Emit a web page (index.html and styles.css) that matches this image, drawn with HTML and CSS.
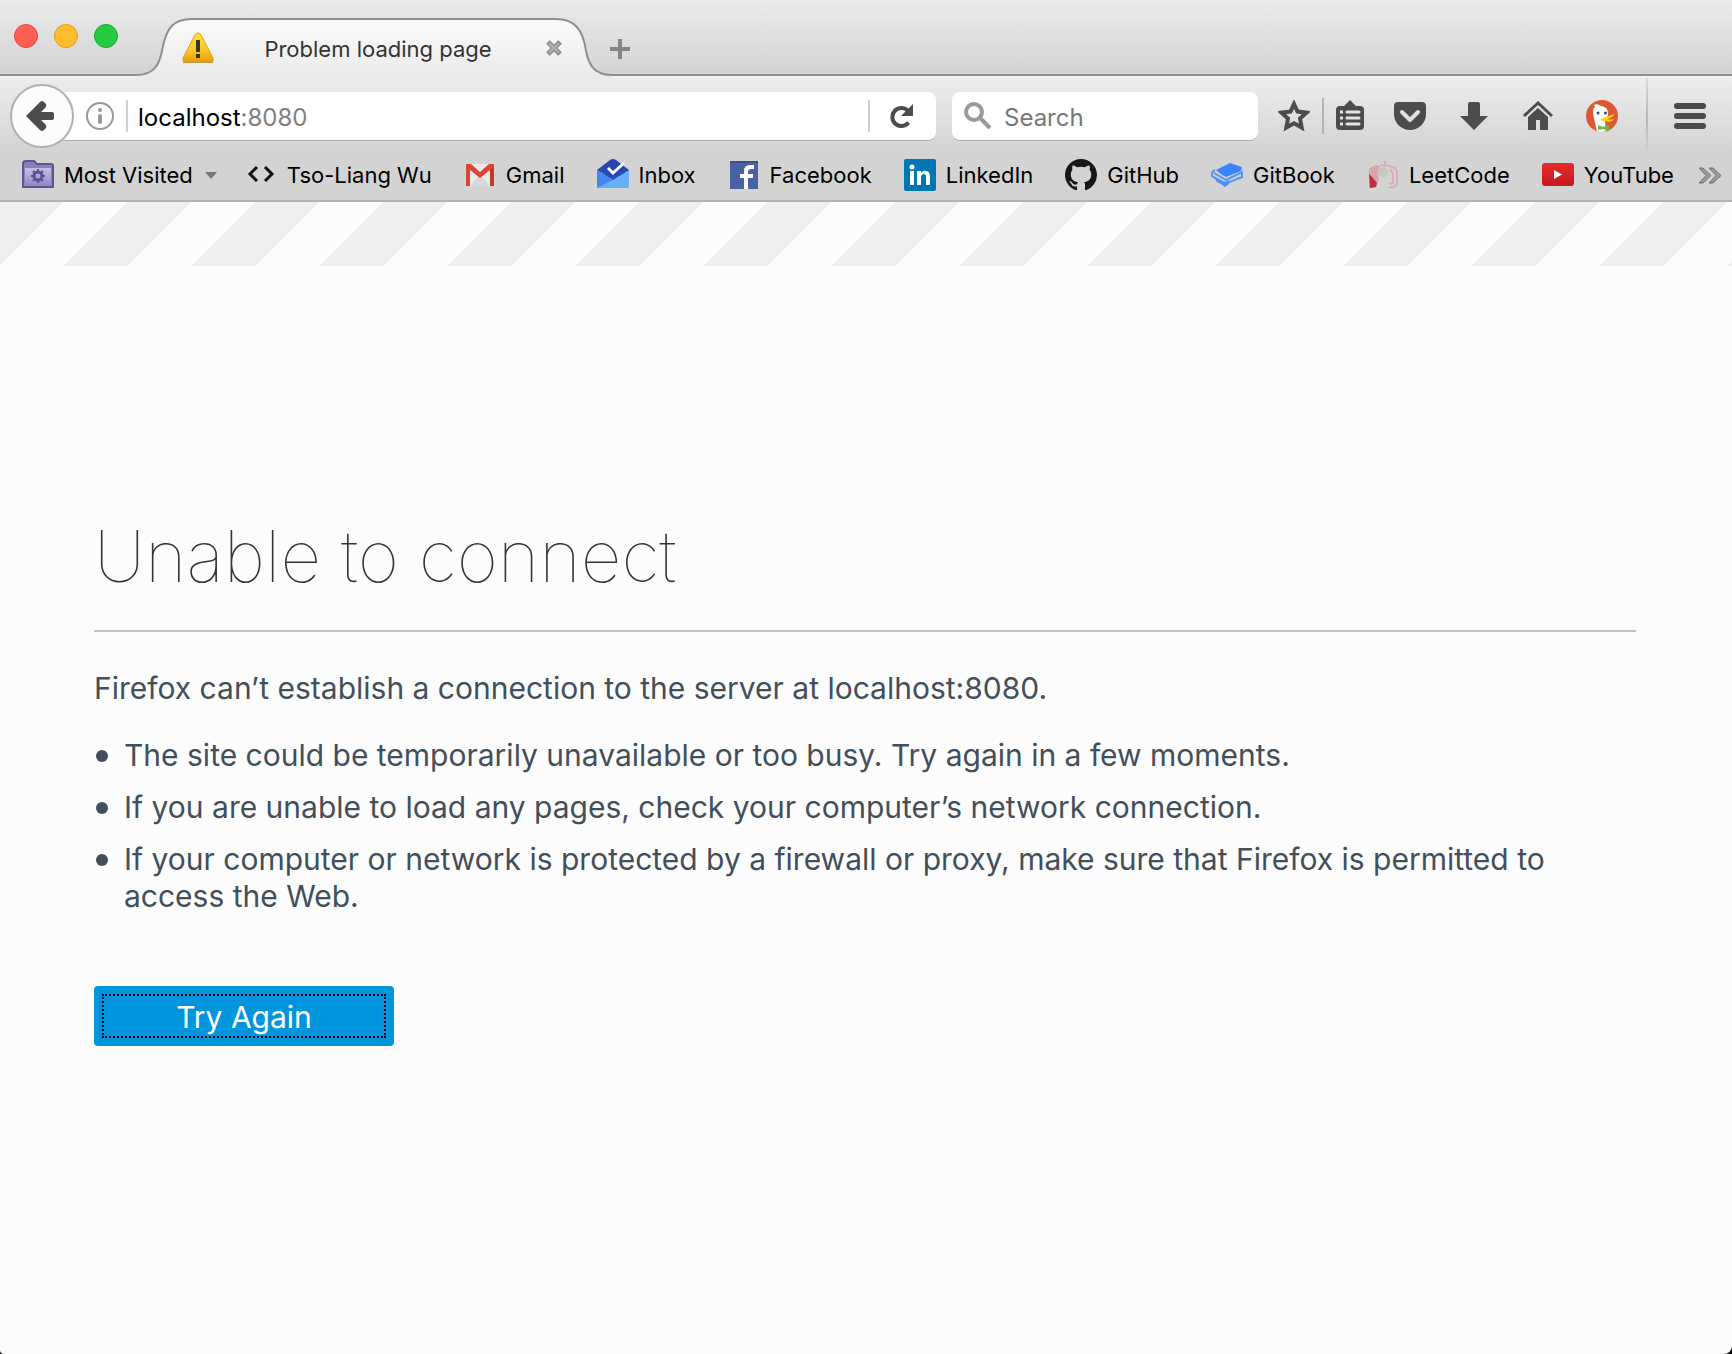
FILE: index.html
```html
<!DOCTYPE html>
<html lang="en">
<head>
<meta charset="utf-8">
<title>Problem loading page</title>
<link rel="stylesheet" href="styles.css">
</head>
<body>
<header class="chrome">
  <div class="titlebar">
    <div class="lights">
      <button class="light light-close" aria-label="Close window"></button>
      <button class="light light-min" aria-label="Minimize window"></button>
      <button class="light light-zoom" aria-label="Zoom window"></button>
    </div>
    <div class="tab">
      <svg class="tab-shape" width="476" height="60" viewBox="0 0 476 60" aria-hidden="true">
        <defs>
          <linearGradient id="tabFill" x1="0" y1="0" x2="0" y2="1"><stop offset="0" stop-color="#fbfbfb"/><stop offset="1" stop-color="#eaeaea"/></linearGradient>
        </defs>
        <path d="M0 60V57C17 57 23 48 26 33C30 9 38 1 56 1H420C438 1 447 11 450 33C453 49 460 57 476 57V60Z" fill="url(#tabFill)"/>
        <path d="M0 57C17 57 23 48 26 33C30 9 38 1 56 1H420C438 1 447 11 450 33C453 49 460 57 476 57" fill="none" stroke="#8f8f8f" stroke-width="2"/>
      </svg>
      <div class="tab-content">
        <svg width="32" height="32" viewBox="0 0 32 32" aria-hidden="true">
          <defs><linearGradient id="warn" x1="0" y1="0" x2="0" y2="1"><stop offset="0" stop-color="#ffe62e"/><stop offset=".6" stop-color="#fbc62a"/><stop offset="1" stop-color="#ee9c05"/></linearGradient></defs>
          <path d="M1 30h30v1H1z" fill="#9a8f7a"/>
          <path d="M16 1Q18 1 19 3L31 26Q32 30 29 30H3Q0 30 1 26L13 3Q14 1 16 1Z" fill="url(#warn)" stroke="#dca310" stroke-width="1"/>
          <path d="M14 8h4v12h-4zM14 22h4v4h-4z" fill="#37352c"/>
        </svg>
        <span class="tab-title">Problem loading page</span>
        <button class="icon-btn" aria-label="Close tab"><svg width="16" height="16" viewBox="0 0 16 16"><path d="M2 2L14 14M14 2L2 14" stroke="#858585" stroke-width="5"/><path d="M3 3L13 13M13 3L3 13" stroke="#acacac" stroke-width="3"/></svg></button>
      </div>
    </div>
    <button class="icon-btn new-tab" aria-label="New tab"><svg width="20" height="20" viewBox="0 0 20 20"><path d="M8 0h4v8h8v4h-8v8H8v-8H0V8h8z" fill="#858585"/></svg></button>
  </div>

  <div class="navbar">
    <button class="back" aria-label="Back"><svg width="28" height="30" viewBox="0 0 28 30"><path d="M0 15L14 1Q16-1 18 1L20 3Q21 5 19 7L15 11H26Q28 11 28 13V17Q28 19 26 19H15L19 23Q21 25 20 27L18 29Q16 31 14 29Z" fill="#4c4c4c"/></svg></button>
    <div class="urlbar">
      <svg width="28" height="28" viewBox="0 0 28 28" aria-hidden="true"><circle cx="14" cy="14" r="13" fill="none" stroke="#999" stroke-width="2"/><circle cx="14" cy="8" r="2" fill="#999"/><path d="M14 14v6" stroke="#999" stroke-width="4" stroke-linecap="round"/></svg>
      <span class="divider"></span>
      <div class="url" role="textbox" aria-label="Address" tabindex="0">localhost<span class="port">:8080</span></div>
      <span class="divider"></span>
      <button class="icon-btn reload" aria-label="Reload"><svg width="24" height="24" viewBox="0 0 24 24"><path d="M18.500 18.500A9 9 0 1 1 18 7" fill="none" stroke="#4c4c4c" stroke-width="4"/><path d="M23 0V12H11Z" fill="#4c4c4c"/></svg></button>
    </div>
    <label class="search">
      <svg width="28" height="28" viewBox="0 0 28 28" aria-hidden="true"><circle cx="10" cy="10" r="8" fill="none" stroke="#999" stroke-width="4"/><path d="M16 16L26 26" stroke="#999" stroke-width="4"/></svg>
      <input type="text" placeholder="Search" aria-label="Search">
    </label>
    <div class="tools">
      <div class="tool-pair">
        <button class="icon-btn" aria-label="Bookmark this page"><svg width="32" height="32" viewBox="0 0 32 32"><path d="M16 4L19.500 11.600L28.500 12.700L22 18.600L23.700 27.600L16 23.300L8.300 27.600L10 18.600L3.500 12.700L12.500 11.600Z" fill="none" stroke="#4c4c4c" stroke-width="4"/></svg></button>
        <span class="divider divider-dark"></span>
        <button class="icon-btn" aria-label="Bookmarks menu"><svg width="32" height="32" viewBox="0 0 32 32"><path d="M6 6H10L16 0L22 6H26Q30 6 30 10V26Q30 30 26 30H6Q2 30 2 26V10Q2 6 6 6Z" fill="#4c4c4c"/><path d="M13 12H25M13 18H25M13 24H25" stroke="#e4e4e4" stroke-width="3" stroke-linecap="round"/><path d="M6 12h3M6 18h3M6 24h3" stroke="#e4e4e4" stroke-width="3"/></svg></button>
      </div>
      <button class="icon-btn" aria-label="Save to Pocket"><svg width="32" height="32" viewBox="0 0 32 32"><path d="M4 2H28Q32 2 32 6V14A16 16 0 0 1 0 14V6Q0 2 4 2Z" fill="#4c4c4c"/><path d="M8 12L16 20L24 12" fill="none" stroke="#e0e0e0" stroke-width="4" stroke-linecap="round" stroke-linejoin="round"/></svg></button>
      <button class="icon-btn" aria-label="Downloads"><svg width="32" height="32" viewBox="0 0 32 32"><path d="M12 2H20Q22 2 22 4V16H30L16 30L2 16H10V4Q10 2 12 2Z" fill="#4c4c4c"/></svg></button>
      <button class="icon-btn" aria-label="Home"><svg width="32" height="32" viewBox="0 0 32 32"><path d="M2 16L16 3L30 16" fill="none" stroke="#4c4c4c" stroke-width="3"/><path d="M16 8L26 17V30H18V20H14V30H6V17Z" fill="#4c4c4c"/></svg></button>
      <button class="icon-btn" aria-label="DuckDuckGo"><svg width="32" height="32" viewBox="0 0 32 32"><circle cx="16" cy="16" r="16" fill="#de5833"/><path d="M8 5Q11 3 15 6Q22 7 22 13Q22 18 19 21L20 31Q15 33 11 31Q8 20 7 12Q7 8 9 7Z" fill="#fff"/><circle cx="12" cy="13" r="1.500" fill="#2d4f8e"/><circle cx="19.500" cy="13" r="1.500" fill="#2d4f8e"/><path d="M15 19Q19 17 23 16L28 14Q28 17 21 19Q25 20 28 19Q26 23 19 21Q15 21 15 19Z" fill="#fdd20a"/><path d="M12 25L17 27L23 25V31L17 29L12 30Z" fill="#65bc46"/></svg></button>
    </div>
    <span class="menu-sep"></span>
    <button class="icon-btn menu" aria-label="Open menu"><svg width="32" height="26" viewBox="0 0 32 26"><path d="M3 3H29M3 13H29M3 23H29" stroke="#4c4c4c" stroke-width="6" stroke-linecap="round"/></svg></button>
  </div>

  <nav class="bookmarks" aria-label="Bookmarks">
    <a class="bookmark" href="#most-visited"><svg width="32" height="32" viewBox="0 0 32 32"><defs><linearGradient id="folder" x1="0" y1="0" x2="0" y2="1"><stop offset="0" stop-color="#c6bfe6"/><stop offset="1" stop-color="#9286c6"/></linearGradient></defs><path d="M1 28V5Q1 2 4 2H12L15 5H29Q31 5 31 7V28Z" fill="#8a80bb" stroke="#5f5690" stroke-width="2"/><path d="M3 9H29V27H3Z" fill="url(#folder)"/><circle cx="16" cy="17" r="4" fill="none" stroke="#5a5295" stroke-width="3"/><path d="M16 10V13M16 21V24M9 17H12M20 17H23M11 12L13 14M19 20L21 22M21 12L19 14M13 20L11 22" stroke="#5a5295" stroke-width="2"/></svg>Most Visited<svg class="caret" width="12" height="7" viewBox="0 0 12 7"><path d="M0 0H12L6 7Z" fill="#777"/></svg></a>
    <a class="bookmark" href="#tso-liang"><svg width="32" height="32" viewBox="0 0 32 32"><path d="M12 8L5 15L12 22M20 8L27 15L20 22" fill="none" stroke="#111" stroke-width="3"/></svg>Tso-Liang Wu</a>
    <a class="bookmark" href="#gmail"><svg width="32" height="32" viewBox="0 0 32 32"><path d="M2 5H30V27H2Z" fill="#e9e9e9"/><path d="M6 27L16 16L26 27Z" fill="#d8d8d8"/><path d="M2 5H7L16 13L25 5H30V27H26V11L16 19L6 11V27H2Z" fill="#db4437"/><path d="M26 11L30 8V27H26Z" fill="#c23a2e"/></svg>Gmail</a>
    <a class="bookmark" href="#inbox"><svg width="32" height="32" viewBox="0 0 32 32"><path d="M0 11L13 1Q16-1 19 1L32 11V29H0Z" fill="#2a4bb8"/><path d="M0 11L16 21L32 11V29H0Z" fill="#67b0f7"/><path d="M0 11L16 21L0 29Z" fill="#4289ef"/><path d="M4 9L14 1Q16 0 18 1L28 9L16 18Z" fill="#2846ac"/><path d="M11 9L16 14L27 4" fill="none" stroke="#fff" stroke-width="3"/></svg>Inbox</a>
    <a class="bookmark" href="#facebook"><svg width="32" height="32" viewBox="0 0 32 32"><path d="M2 2H30V30H2Z" fill="#4862a3"/><path d="M2 2H30V4H2Z" fill="#3a5086"/><path d="M16 30V19H12V15H16V12Q16 6 22 6H26V10H23Q20 10 20 13V15H25V19H20V30Z" fill="#fff"/></svg>Facebook</a>
    <a class="bookmark" href="#linkedin"><svg width="32" height="32" viewBox="0 0 32 32"><rect width="32" height="32" rx="2" fill="#0077b5"/><path d="M6 12H10V26H6ZM13 12H17V14Q19 11 22 12Q26 12 26 18V26H22V18Q22 15 20 15Q17 15 17 19V26H13Z" fill="#fff"/><circle cx="8" cy="8" r="2.500" fill="#fff"/></svg>LinkedIn</a>
    <a class="bookmark" href="#github"><svg width="32" height="32" viewBox="0 0 16 16"><path fill="#181616" d="M8 0C3.580 0 0 3.580 0 8c0 3.540 2.290 6.530 5.470 7.590.4.070.55-.17.55-.38 0-.19-.01-.82-.01-1.490-2.010.37-2.530-.49-2.690-.94-.09-.23-.48-.94-.82-1.130-.28-.15-.68-.52-.01-.53.63-.01 1.080.58 1.230.82.72 1.210 1.870.87 2.330.66.07-.52.28-.87.51-1.070-1.780-.2-3.640-.89-3.640-3.950 0-.87.31-1.590.82-2.150-.08-.2-.36-1.020.08-2.120 0 0 .67-.21 2.200.82.64-.18 1.320-.27 2-.27s1.360.09 2 .27c1.530-1.040 2.200-.82 2.200-.82.44 1.100.16 1.920.08 2.120.51.56.82 1.270.82 2.150 0 3.070-1.870 3.750-3.650 3.950.29.25.54.73.54 1.480 0 1.070-.01 1.930-.01 2.200 0 .21.15.46.55.38A8.010 8.010 0 0 0 16 8c0-4.420-3.580-8-8-8z"/></svg>GitHub</a>
    <a class="bookmark" href="#gitbook"><svg width="32" height="32" viewBox="0 0 32 32"><path d="M5 11L19 4Q25 6 31 8L30 12L15 18Q9 15 5 11Z" fill="#3884ff"/><path d="M4 11Q0 13 1 17L14 25L31 18V13L15 21L3 14" fill="none" stroke="#5595fa" stroke-width="2"/><path d="M4 18L14 23L18 21V25L14 28L5 22Z" fill="#4a8dfb"/></svg>GitBook</a>
    <a class="bookmark" href="#leetcode"><svg width="32" height="32" viewBox="0 0 32 32"><path d="M4 8Q10 5 13 7L11 14L12 20L9 28L2 29V10Z" fill="#dba5ac"/><path d="M2 15L6 19L10 24L9 28L3 29Z" fill="#c22c46"/><circle cx="16" cy="13" r="5" fill="#c9c8c0"/><path d="M18 2V8M13 6L24 7M23 8Q30 8 30 14V25Q28 29 22 28M23 11Q26 12 26 16V23Q24 26 22 24" fill="none" stroke="#dfaab2" stroke-width="2"/></svg>LeetCode</a>
    <a class="bookmark" href="#youtube"><svg width="32" height="32" viewBox="0 0 32 32"><defs><linearGradient id="yt" x1="0" y1="0" x2="0" y2="1"><stop offset="0" stop-color="#e62b2c"/><stop offset="1" stop-color="#c4191d"/></linearGradient></defs><rect y="4" width="32" height="23" rx="3" fill="url(#yt)"/><path d="M12 11L20 15.500L12 20Z" fill="#fff"/></svg>YouTube</a>
    <button class="icon-btn overflow" aria-label="More bookmarks"><svg width="24" height="17" viewBox="0 0 24 17"><path d="M1 1H5L13 8.500L5 16H1L8 8.500ZM11 1H15L23 8.500L15 16H11L18 8.500Z" fill="#999" stroke="#6f6f6f"/></svg></button>
  </nav>
</header>

<main class="page">
  <section class="error">
    <h1 class="error-title">Unable to connect</h1>
    <p class="error-lead">Firefox can’t establish a connection to the server at localhost:8080.</p>
    <ul class="error-list">
      <li>The site could be temporarily unavailable or too busy. Try again in a few moments.</li>
      <li>If you are unable to load any pages, check your computer’s network connection.</li>
      <li>If your computer or network is protected by a firewall or proxy, make sure that Firefox is permitted to access the Web.</li>
    </ul>
    <button class="retry">Try Again</button>
  </section>
</main>
</body>
</html>
```
FILE: styles.css
```css
* {
  box-sizing: border-box;
}

html {
  background: #000;
}

body {
  margin: 0;
  min-height: 100vh;
  display: flex;
  flex-direction: column;
  font-family: Inter, "Liberation Sans", sans-serif;
}

svg {
  display: block;
  flex: none;
}

button {
  font: inherit;
  border: 0;
  padding: 0;
}

.icon-btn {
  display: grid;
  place-items: center;
  flex: none;
  background: none;
}

.chrome {
  background: #d3d3d3;
  border-bottom: 2px solid #b1b1b1;
}

/* Title bar and tabs */
.titlebar {
  display: flex;
  align-items: flex-end;
  height: 76px;
  padding-left: 14px;
  background: linear-gradient(#ebebeb, #d3d3d3);
  border-bottom: 2px solid #8f8f8f;
}

.lights {
  display: flex;
  gap: 16px;
  width: 122px;
  padding-bottom: 26px;
}

.light {
  width: 24px;
  height: 24px;
  border-radius: 50%;
  border: 1px solid;
}

.light-close {
  background: #ff5f57;
  border-color: #e2463f;
}

.light-min {
  background: #ffbd2e;
  border-color: #e1a116;
}

.light-zoom {
  background: #28ca41;
  border-color: #12ac28;
}

.tab {
  display: grid;
  width: 476px;
  margin-bottom: -4px;
}

.tab-shape,
.tab-content {
  grid-area: 1 / 1;
}

.tab-content {
  display: flex;
  align-items: center;
  padding: 0 50px 0 46px;
}

.tab-title {
  flex: 1;
  padding: 2px 4px 0 0;
  text-align: center;
  font-size: 22px;
  color: #333;
}

.new-tab {
  align-self: center;
  margin-left: -2px;
  padding-top: 24px;
}

/* Navigation bar */
.navbar {
  display: flex;
  align-items: center;
  height: 78px;
  padding: 0 26px 0 10px;
  background: linear-gradient(#ececec, #d3d3d3);
  border-top: 2px solid #f3f3f3;
}

.back {
  display: grid;
  place-items: center;
  flex: none;
  width: 64px;
  height: 64px;
  margin-right: -16px;
  padding-right: 4px;
  border: 2px solid #b1b1b1;
  border-radius: 50%;
  background: #fcfcfc;
  z-index: 1;
}

.urlbar,
.search {
  display: flex;
  align-items: center;
  height: 49px;
  background: #fff;
  border-bottom: 1px solid #aaa;
  border-radius: 8px;
  font-size: 24px;
}

.urlbar {
  flex: 1;
  padding-left: 28px;
  margin-right: 16px;
}

.divider {
  flex: none;
  width: 2px;
  height: 32px;
  margin: 0 10px 0 12px;
  background: #d0d0d0;
}

.divider-dark {
  height: 36px;
  background: #b4b4b4;
}

.url {
  flex: 1;
  padding-top: 4px;
}

.port {
  color: #808080;
}

.reload {
  width: 44px;
  margin-right: 12px;
}

.search {
  width: 306px;
  gap: 12px;
  padding: 0 12px;
}

.search input {
  flex: 1;
  min-width: 0;
  border: 0;
  padding: 4px 0 0;
  background: none;
  font: inherit;
}

.search input::placeholder {
  color: #777;
  opacity: 1;
}

.tools {
  display: flex;
  align-items: center;
  gap: 32px;
  padding: 0 28px 0 20px;
}

.tool-pair {
  display: flex;
  align-items: center;
  margin-right: -4px;
}

.menu-sep {
  width: 2px;
  height: 76px;
  margin-right: 26px;
  background: linear-gradient(#dcdcdc, #b6b6b6 50%, #d3d3d3);
}

/* Bookmarks toolbar */
.bookmarks {
  display: flex;
  align-items: center;
  gap: 32px;
  height: 46px;
  padding: 0 8px 4px 22px;
}

.bookmark {
  display: flex;
  align-items: center;
  gap: 10px;
  font-size: 22px;
  color: #000;
  text-decoration: none;
  white-space: nowrap;
}

.caret {
  margin: 0 -4px 0 2px;
}

.overflow {
  margin-left: -8px;
}

/* Error page, with a 64px band of stripes along its top */
.page {
  flex: 1;
  display: flex;
  flex-direction: column;
  justify-content: center;
  padding: 0 96px 2px 94px;
  border-radius: 0 0 8px 4px;
  background:
    linear-gradient(#fcfcfc, #fcfcfc) 0 64px no-repeat,
    linear-gradient(135deg, #eee 25%, #fcfcfc 25% 50%, #eee 50% 75%, #fcfcfc 75%) -1px 0 / 128px 128px;
}

.error {
  color: #424f5a;
  font-size: 30px;
  line-height: 37px;
}

.error-title {
  margin: 0 0 38px;
  padding-bottom: 26px;
  border-bottom: 2px solid #c1c1c1;
  color: #333;
  font-size: 71px;
  line-height: 96px;
  font-weight: 100;
}

.error-lead {
  margin: 0 0 30px;
}

.error-list {
  margin: 0 0 71px;
  padding-left: 2px;
  list-style: none;
}

.error-list li {
  display: flex;
  align-items: flex-start;
  gap: 16px;
  margin-bottom: 15px;
}

.error-list li::before {
  content: "";
  flex: none;
  width: 12px;
  height: 12px;
  margin-top: 13px;
  border-radius: 50%;
  background: currentColor;
}

.retry {
  display: block;
  width: 300px;
  height: 60px;
  padding-top: 2px;
  border-radius: 4px;
  background: #0095dd;
  color: #fff;
  outline: 2px dotted #000;
  outline-offset: -10px;
}
```
